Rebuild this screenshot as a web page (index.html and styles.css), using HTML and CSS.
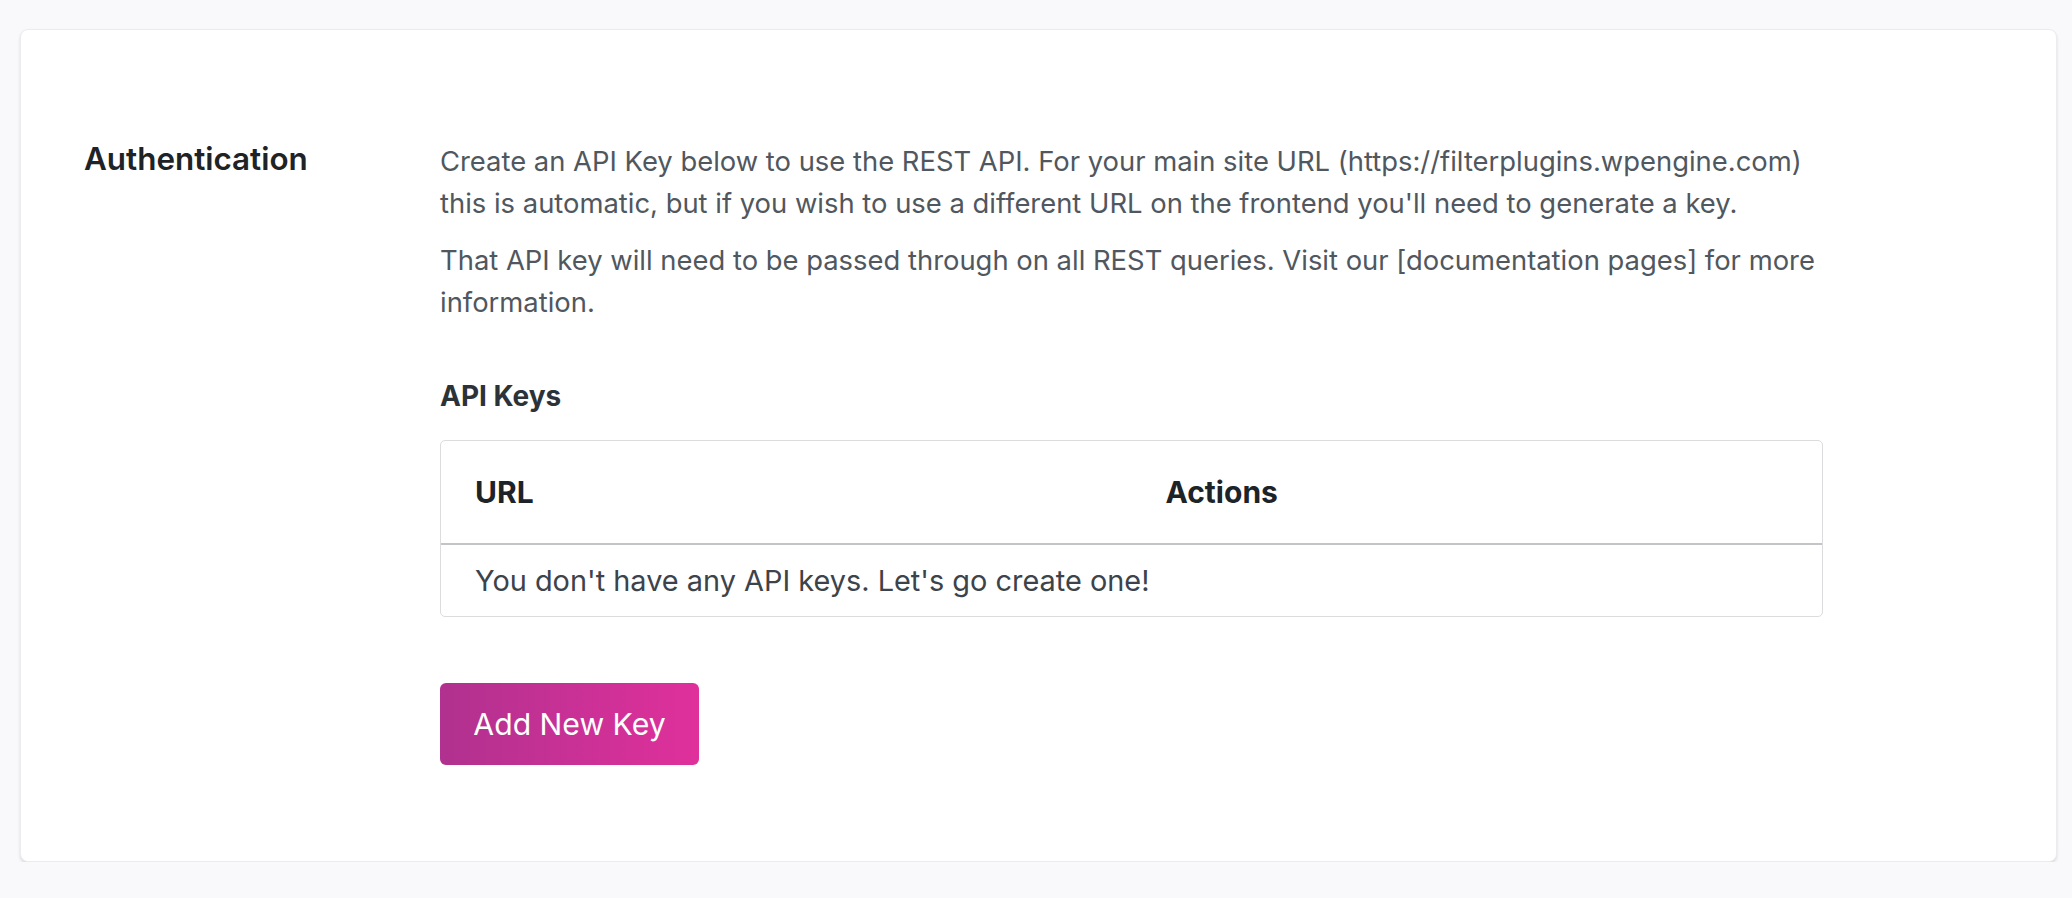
FILE: index.html
```html
<!DOCTYPE html>
<html>
<head>
<meta charset="utf-8">
<link rel="stylesheet" href="styles.css">
</head>
<body>
<div class="card">
  <div class="row">
    <div class="label"><h2 class="section-title">Authentication</h2></div>
    <div class="content">
      <p class="desc">Create an API Key below to use the REST API. For your main site URL (https://filterplugins.wpengine.com) this is automatic, but if you wish to use a different URL on the frontend you'll need to generate a key.</p>
      <p class="desc second">That API key will need to be passed through on all REST queries. Visit our [documentation pages] for more information.</p>
      <h3 class="keys-title">API Keys</h3>
      <div class="table-wrap">
        <table class="keys">
          <thead>
            <tr><th>URL</th><th>Actions</th></tr>
          </thead>
          <tbody>
            <tr><td colspan="2">You don't have any API keys. Let's go create one!</td></tr>
          </tbody>
        </table>
      </div>
      <button class="btn-add">Add New Key</button>
    </div>
  </div>
</div>
</body>
</html>
```
FILE: styles.css
```css
html, body {
  margin: 0;
  padding: 0;
  background: #f9f9fb;
  font-family: Inter, "Noto Sans", sans-serif;
}
.card {
  margin: 29px 15px 0 20px;
  background: #fff;
  border: 1px solid #ececf0;
  border-radius: 8px;
  box-shadow: 0 2px 3px rgba(0,0,0,0.12);
  padding: 110px 0 96px 63px;
}
.row {
  display: flex;
}
.label {
  width: 356px;
  flex: none;
}
.section-title {
  margin: 0;
  font-size: 31.4px;
  line-height: 42px;
  font-weight: 600;
  color: #1d2327;
  position: relative;
  top: -2px;
}
.content {
  width: 1383px;
}
.desc {
  margin: 0;
  font-size: 27.4px;
  line-height: 42px;
  color: #50575e;
}
.desc.second {
  margin-top: 15px;
}
.keys-title {
  margin: 55px 0 26px;
  font-size: 28px;
  line-height: 36px;
  font-weight: 700;
  color: #2c3338;
}
.table-wrap {
  border: 1px solid #dcdcde;
  border-radius: 5px;
  overflow: hidden;
}
.keys {
  width: 100%;
  border-collapse: collapse;
  table-layout: fixed;
}
.keys th {
  text-align: left;
  padding: 0 34px;
  height: 102px;
  font-size: 30px;
  font-weight: 700;
  color: #1d2327;
  border-bottom: 2px solid #c3c4c7;
}
.keys td {
  padding: 0 34px;
  height: 71px;
  font-size: 28.9px;
  color: #3c434a;
}
.btn-add {
  margin-top: 66px;
  width: 259px;
  height: 82px;
  border: none;
  border-radius: 6px;
  background: linear-gradient(90deg, #b0318f 0%, #e0309b 100%);
  color: #fff;
  font-family: Inter, "Noto Sans", sans-serif;
  font-size: 30.2px;
  padding: 0;
  cursor: pointer;
}
```
